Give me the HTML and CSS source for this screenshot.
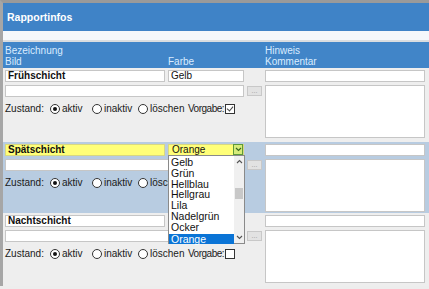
FILE: index.html
```html
<!DOCTYPE html>
<html lang="de">
<head>
<meta charset="utf-8">
<title>Rapportinfos</title>
<link rel="stylesheet" href="styles.css">
</head>
<body>
<div class="frame">
  <div class="title">Rapportinfos</div>
  <div class="spacer"></div>
  <div class="colhead">
    <div class="c1"><div>Bezeichnung</div><div>Bild</div></div>
    <div class="c2"><div>&nbsp;</div><div>Farbe</div></div>
    <div class="c3"></div>
    <div class="c4"><div>Hinweis</div><div>Kommentar</div></div>
  </div>

  <div class="row">
    <div class="field bold">Frühschicht</div>
    <div class="field">Gelb</div>
    <div></div>
    <div class="field"></div>
    <div class="field span2"></div>
    <div class="btn">...</div>
    <div class="area"></div>
    <div class="state">
      <span class="lbl">Zustand:</span>
      <span class="opt w42"><i class="radio on"></i>aktiv</span>
      <span class="opt w46"><i class="radio"></i>inaktiv</span>
      <span class="opt w50"><i class="radio"></i>löschen</span>
      <span class="opt vg">Vorgabe:<i class="check on"></i></span>
    </div>
  </div>

  <div class="row sel">
    <div class="field bold yellow">Spätschicht</div>
    <div class="field yellow select">Orange<span class="ddbtn"><svg width="7" height="5" viewBox="0 0 7 5"><path d="M1 1 L3.5 3.5 L6 1" fill="none" stroke="#3a6a20" stroke-width="1.2"/></svg></span>
      <div class="list">
        <div class="items">
          <div>Gelb</div><div>Grün</div><div>Hellblau</div><div>Hellgrau</div><div>Lila</div><div>Nadelgrün</div><div>Ocker</div><div class="hl">Orange</div>
        </div>
        <div class="sb">
          <svg class="up" width="7" height="5" viewBox="0 0 7 5"><path d="M1 4 L3.5 1.5 L6 4" fill="none" stroke="#555" stroke-width="1.1"/></svg>
          <div class="thumb"></div>
          <svg class="down" width="7" height="5" viewBox="0 0 7 5"><path d="M1 1 L3.5 3.5 L6 1" fill="none" stroke="#555" stroke-width="1.1"/></svg>
        </div>
      </div>
    </div>
    <div></div>
    <div class="field"></div>
    <div class="field span2"></div>
    <div class="btn">...</div>
    <div class="area"></div>
    <div class="state">
      <span class="lbl">Zustand:</span>
      <span class="opt w42"><i class="radio on"></i>aktiv</span>
      <span class="opt w46"><i class="radio"></i>inaktiv</span>
      <span class="opt w50"><i class="radio"></i>löschen</span>
      <span class="opt vg">Vorgabe:<i class="check on"></i></span>
    </div>
  </div>

  <div class="row">
    <div class="field bold">Nachtschicht</div>
    <div class="field"></div>
    <div></div>
    <div class="field"></div>
    <div class="field span2"></div>
    <div class="btn">...</div>
    <div class="area"></div>
    <div class="state">
      <span class="lbl">Zustand:</span>
      <span class="opt w42"><i class="radio on"></i>aktiv</span>
      <span class="opt w46"><i class="radio"></i>inaktiv</span>
      <span class="opt w50"><i class="radio"></i>löschen</span>
      <span class="opt vg">Vorgabe:<i class="check"></i></span>
    </div>
  </div>
</div>
</body>
</html>
```

FILE: styles.css
```css
html, body {
  margin: 0;
  padding: 0;
  background: #ededed;
  font-family: "Liberation Sans", Arial, sans-serif;
  font-size: 10px;
  color: #111;
  overflow: hidden;
}
.frame {
  border-top: 3px solid #9a9a9a;
  border-left: 3px solid #a6a6a6;
  height: 286px;
  box-sizing: border-box;
}
.title {
  height: 28px;
  background: #3f83c7;
  color: #fff;
  font-weight: bold;
  font-size: 10.5px;
  line-height: 28px;
  padding-left: 4px;
}
.spacer {
  height: 9px;
  background: #f5f8fb;
  border-bottom: 2px solid #dadde0;
}
.colhead {
  height: 26px;
  box-sizing: border-box;
  background: #4185c8;
  color: #d9ecff;
  padding: 3px 4px 0 2px;
  line-height: 11px;
  display: grid;
  grid-template-columns: 160px 76px 15px 160px;
  column-gap: 3px;
}
.row {
  display: grid;
  grid-template-columns: 160px 76px 15px 160px;
  grid-template-rows: 12px 12px auto;
  column-gap: 3px;
  row-gap: 3px;
  padding: 2px 0 4px 2px;
  background: #eeeeee;
}
.row.sel {
  background: #b8cce1;
  padding-bottom: 1px;
}
.field {
  background: #fff;
  border: 1px solid #c6c6c6;
  box-sizing: border-box;
  height: 12px;
  line-height: 10px;
  padding-left: 2px;
  white-space: nowrap;
}
.bold { font-weight: bold; }
.yellow { background: #ffff78; border-color: #d8d880; }
.span2 { grid-column: 1 / 3; }
.select {
  position: relative;
  padding-left: 3px;
}
.ddbtn {
  position: absolute;
  right: 0;
  top: -1px;
  width: 10px;
  height: 11px;
  box-sizing: border-box;
  border: 1px solid #5e9a3a;
  background: #d6ec7a;
  display: flex;
  align-items: center;
  justify-content: center;
}
.list {
  position: absolute;
  left: -1px;
  top: 10px;
  width: 77px;
  height: 89px;
  box-sizing: border-box;
  background: #fff;
  border: 1px solid #8a8a8a;
  display: flex;
  z-index: 5;
  font-weight: normal;
  font-size: 10.5px;
}
.items {
  flex: 1;
  padding-top: 1px;
  line-height: 10.8px;
}
.items div {
  padding-left: 2px;
  height: 10.8px;
}
.items .hl {
  background: #0a74d6;
  color: #fff;
  margin-top: 1px;
}
.sb {
  width: 10px;
  background: #f0f0f0;
  position: relative;
}
.sb svg { position: absolute; left: 2px; }
.sb .up { top: 3px; }
.sb .down { bottom: 3px; }
.thumb {
  position: absolute;
  left: 1px;
  width: 8px;
  top: 32px;
  height: 11px;
  background: #c8c8c8;
}
.btn {
  grid-row: 2;
  grid-column: 3;
  height: 10px;
  margin-top: 1px;
  box-sizing: border-box;
  border: 1px solid #c8c8c8;
  background: #e2e2e2;
  color: #999;
  font-size: 7px;
  line-height: 8px;
  text-align: center;
}
.area {
  grid-column: 4;
  grid-row: 2 / 4;
  height: 53px;
  background: #fff;
  border: 1px solid #c6c6c6;
  box-sizing: border-box;
}
.state {
  grid-column: 1 / 4;
  grid-row: 3;
  display: flex;
  align-items: center;
  height: 12px;
  margin-top: 3px;
  line-height: 12px;
  color: #1a1a1a;
}
.lbl { width: 45px; }
.opt { display: flex; align-items: center; }
.vg { letter-spacing: -0.5px; }
.w42 { width: 42px; }
.w46 { width: 46px; }
.w50 { width: 50px; }
.radio {
  width: 10px;
  height: 10px;
  box-sizing: border-box;
  border: 1px solid #333;
  border-radius: 50%;
  background: #fff;
  margin-right: 2px;
  position: relative;
}
.radio.on::after {
  content: "";
  position: absolute;
  left: 2px;
  top: 2px;
  width: 4px;
  height: 4px;
  border-radius: 50%;
  background: #111;
}
.check {
  width: 10px;
  height: 10px;
  box-sizing: border-box;
  border: 1px solid #333;
  background: #fff;
  margin-left: 1px;
  position: relative;
}
.check.on::after {
  content: "";
  position: absolute;
  left: 2px;
  top: 0px;
  width: 3px;
  height: 5px;
  border-right: 1px solid #444;
  border-bottom: 1px solid #444;
  transform: rotate(40deg);
}
```
